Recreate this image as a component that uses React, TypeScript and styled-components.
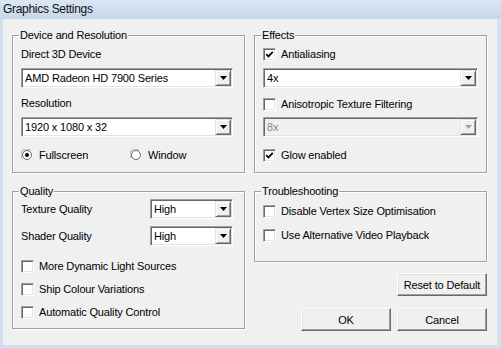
import styled, { createGlobalStyle } from "styled-components";

const GlobalStyle = createGlobalStyle`
  html, body {
    margin: 0;
    padding: 0;
    background: #d3e0ef;
  }
  body {
    font-family: "Liberation Sans", Arial, sans-serif;
    font-size: 11px;
    letter-spacing: -0.15px;
    color: #000;
  }
`;

const Window = styled.div`
  width: 501px;
  height: 348px;
  display: flex;
  flex-direction: column;
  background: #d3e0ef;
`;

const TitleBar = styled.div`
  height: 19px;
  flex: none;
  padding-left: 3px;
  font-size: 12px;
  letter-spacing: -0.3px;
  line-height: 19px;
  color: #111;
  background: linear-gradient(#dbe6f3, #c6d7eb);
`;

const Body = styled.div`
  flex: 1;
  margin: 0 4px 3px 3px;
  padding: 10px 0 0 9px;
  background: #f0f0f0;
  display: grid;
  grid-template-columns: 233px 233px;
  column-gap: 9px;
  row-gap: 12px;
  align-content: start;
  align-items: start;
`;

const Group = styled.fieldset<{ $padRight?: number; $padBottom: number }>`
  margin: 0;
  min-width: 0;
  padding: 0 ${(p) => p.$padRight ?? 8}px ${(p) => p.$padBottom}px 8px;
  border: 1px solid #a0a0a0;
  box-shadow: inset 1px 1px #fff, 1px 1px #fff;
  display: flex;
  flex-direction: column;
`;

const Legend = styled.legend`
  padding: 0 1px;
  margin-left: -2px;
  line-height: 13px;
  background: #f0f0f0;
`;

const Label = styled.div<{ $mt: number }>`
  margin-top: ${(p) => p.$mt}px;
  line-height: 13px;
  white-space: nowrap;
`;

const Combo = styled.div<{ $mt?: number; $disabled?: boolean }>`
  margin-top: ${(p) => p.$mt ?? 0}px;
  height: 20px;
  box-sizing: border-box;
  display: flex;
  border: 1px solid;
  border-color: #a0a0a0 #fff #fff #a0a0a0;
  box-shadow: inset 1px 1px #696969, inset -1px -1px #e3e3e3;
  background: ${(p) => (p.$disabled ? "#f0f0f0" : "#fff")};
  color: ${(p) => (p.$disabled ? "#8a8a8a" : "#000")};
  padding: 1px;
`;

const ComboText = styled.span`
  flex: 1;
  padding-left: 2px;
  line-height: 16px;
  white-space: nowrap;
  overflow: hidden;
`;

const ComboButton = styled.span`
  width: 16px;
  height: 16px;
  box-sizing: border-box;
  flex: none;
  display: flex;
  align-items: center;
  justify-content: center;
  background: #f0f0f0;
  border: 1px solid;
  border-color: #e3e3e3 #696969 #696969 #e3e3e3;
  box-shadow: inset 1px 1px #fff, inset -1px -1px #a0a0a0;
`;

const CheckRow = styled.div<{ $mt: number }>`
  margin-top: ${(p) => p.$mt}px;
  height: 14px;
  display: flex;
  align-items: center;
  gap: 5px;
  white-space: nowrap;
`;

const Box = styled.span`
  width: 13px;
  height: 13px;
  box-sizing: border-box;
  flex: none;
  display: flex;
  align-items: center;
  justify-content: center;
  border: 1px solid;
  border-color: #a0a0a0 #fff #fff #a0a0a0;
  box-shadow: inset 1px 1px #696969, inset -1px -1px #e3e3e3;
  background: #fff;
`;

const RadioRow = styled.div`
  margin-top: 11px;
  height: 14px;
  display: grid;
  grid-template-columns: 109px auto;
  align-items: center;
`;

const RadioItem = styled.div`
  display: flex;
  align-items: center;
  gap: 6px;
`;

const FieldRow = styled.div<{ $mt: number }>`
  margin-top: ${(p) => p.$mt}px;
  display: grid;
  grid-template-columns: 129px 83px;
  align-items: center;
`;

const RightStack = styled.div`
  display: flex;
  flex-direction: column;
  align-items: flex-end;
`;

const Button = styled.button<{ $mt?: number }>`
  margin-top: ${(p) => p.$mt ?? 0}px;
  width: 90px;
  height: 23px;
  padding: 0;
  font: inherit;
  letter-spacing: inherit;
  color: #000;
  background: #f0f0f0;
  border: 1px solid;
  border-color: #fff #696969 #696969 #fff;
  box-shadow: inset -1px -1px #a0a0a0, inset 1px 1px #e3e3e3;
`;

const ButtonRow = styled.div`
  margin-top: 12px;
  display: flex;
  gap: 6px;
`;

const Arrow = ({ disabled }: { disabled?: boolean }) => (
  <svg width="7" height="4" viewBox="0 0 7 4">
    <polygon points="0,0 7,0 3.5,4" fill={disabled ? "#a0a0a0" : "#000"} />
  </svg>
);

const Select = ({ value, mt, disabled }: { value: string; mt?: number; disabled?: boolean }) => (
  <Combo $mt={mt} $disabled={disabled}>
    <ComboText>{value}</ComboText>
    <ComboButton>
      <Arrow disabled={disabled} />
    </ComboButton>
  </Combo>
);

const Check = ({ label, checked, mt }: { label: string; checked?: boolean; mt: number }) => (
  <CheckRow $mt={mt}>
    <Box>
      {checked && (
        <svg width="9" height="9" viewBox="0 0 9 9">
          <path d="M1.2 4.2 L3.4 6.4 L7.8 1.8" stroke="#000" strokeWidth="1.8" fill="none" />
        </svg>
      )}
    </Box>
    {label}
  </CheckRow>
);

const Radio = ({ label, checked }: { label: string; checked?: boolean }) => (
  <RadioItem>
    <svg width="12" height="12" viewBox="0 0 12 12">
      <path d="M1.5 9.5 A5.5 5.5 0 0 1 9.5 1.5" stroke="#a0a0a0" fill="none" />
      <path d="M9.5 1.5 A5.5 5.5 0 0 1 1.5 9.5" stroke="#fff" fill="none" />
      <circle cx="6" cy="6" r="4.5" fill="#fff" stroke="#696969" strokeWidth="1" />
      {checked && <circle cx="6" cy="6" r="2" fill="#000" />}
    </svg>
    {label}
  </RadioItem>
);

export default function App() {
  return (
    <Window>
      <GlobalStyle />
      <TitleBar>Graphics Settings</TitleBar>
      <Body>
        <Group $padRight={11} $padBottom={10}>
          <Legend>Device and Resolution</Legend>
          <Label $mt={6}>Direct 3D Device</Label>
          <Select value="AMD Radeon HD 7900 Series" mt={7} />
          <Label $mt={9}>Resolution</Label>
          <Select value="1920 x 1080 x 32" mt={7} />
          <RadioRow>
            <Radio label="Fullscreen" checked />
            <Radio label="Window" />
          </RadioRow>
        </Group>

        <Group $padBottom={10}>
          <Legend>Effects</Legend>
          <Check label="Antialiasing" checked mt={5} />
          <Select value="4x" mt={7} />
          <Check label="Anisotropic Texture Filtering" mt={9} />
          <Select value="8x" mt={6} disabled />
          <Check label="Glow enabled" checked mt={11} />
        </Group>

        <Group $padRight={11} $padBottom={9}>
          <Legend>Quality</Legend>
          <FieldRow $mt={1}>
            <span>Texture Quality</span>
            <Select value="High" />
          </FieldRow>
          <FieldRow $mt={7}>
            <span>Shader Quality</span>
            <Select value="High" />
          </FieldRow>
          <Check label="More Dynamic Light Sources" mt={13} />
          <Check label="Ship Colour Variations" mt={9} />
          <Check label="Automatic Quality Control" mt={9} />
        </Group>

        <RightStack>
          <Group $padBottom={19} style={{ alignSelf: "stretch" }}>
            <Legend>Troubleshooting</Legend>
            <Check label="Disable Vertex Size Optimisation" mt={6} />
            <Check label="Use Alternative Video Playback" mt={10} />
          </Group>
          <Button $mt={11}>Reset to Default</Button>
          <ButtonRow>
            <Button>OK</Button>
            <Button>Cancel</Button>
          </ButtonRow>
        </RightStack>
      </Body>
    </Window>
  );
}
